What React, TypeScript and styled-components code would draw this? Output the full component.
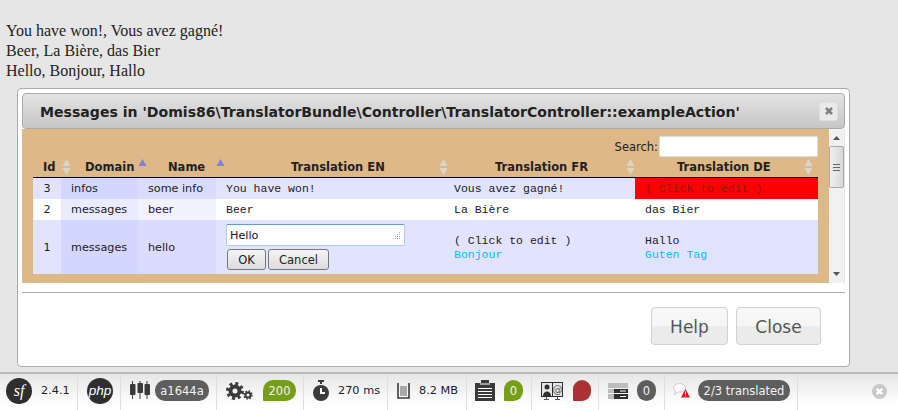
import React from 'react';
import styled, { createGlobalStyle } from 'styled-components';

const GlobalStyle = createGlobalStyle`
  html, body {
    margin: 0;
    height: 410px;
    overflow: hidden;
    background: #e6e6e6;
    font-family: "Liberation Serif", serif;
  }
`;

const Page = styled.div`
  width: 898px;
  height: 410px;
  display: flex;
  flex-direction: column;
`;

const Greetings = styled.div`
  padding: 21px 0 7px 6px;
  font-size: 16px;
  line-height: 20px;
  color: #222;
`;

const Dialog = styled.div`
  margin-left: 17px;
  width: 823px;
  height: 269px;
  padding: 4px;
  background: #fff;
  border: 1px solid #aaa;
  border-radius: 4px;
  font-family: "DejaVu Sans", sans-serif;
`;

const TitleBar = styled.div`
  height: 34px;
  display: flex;
  align-items: center;
  justify-content: space-between;
  padding: 0 6px 0 17px;
  background: linear-gradient(#e3e3e3, #c6c6c6);
  border: 1px solid #aaa;
  border-radius: 4px;
  font-size: 14.08px;
  font-weight: bold;
  color: #222;

  > span {
    padding-top: 2px;
  }
`;

const CloseX = styled.button`
  width: 19px;
  height: 19px;
  padding: 0;
  border: 1px solid #dedede;
  border-radius: 3px;
  background: #eaeaea;
  color: #808080;
  display: flex;
  align-items: center;
  justify-content: center;
`;

const Body = styled.div`
  display: flex;
  height: 154px;
`;

const Content = styled.div`
  width: 808px;
  padding: 7px 11px 9px;
  box-sizing: border-box;
  background: #deb887;
`;

const SearchRow = styled.label`
  height: 21px;
  display: flex;
  justify-content: flex-end;
  align-items: center;
  gap: 1px;
  font-size: 11.5px;
  color: #222;
`;

const SearchInput = styled.div`
  width: 157px;
  height: 19px;
  background: #fff;
  border: 1px solid #ddd;
  border-radius: 1px;
`;

const Table = styled.table`
  width: 785px;
  table-layout: fixed;
  border-collapse: collapse;
`;

const Head = styled.th<{ $x: number }>`
  position: relative;
  height: 20px;
  padding: 0 0 0 ${(p) => p.$x}px;
  border-bottom: 1px solid #000;
  font-size: 11.5px;
  font-weight: bold;
  color: #222;
  text-align: left;
  white-space: nowrap;
`;

const SortMark = styled.svg<{ $r: number }>`
  position: absolute;
  top: 2px;
  right: ${(p) => p.$r}px;
`;

const Row = styled.tr<{ $even?: boolean; $tall?: boolean }>`
  background: ${(p) => (p.$even ? '#fff' : '#e2e4ff')};

  td {
    height: ${(p) => (p.$tall ? 54 : 21)}px;
  }
`;

const Cell = styled.td<{ $sorted?: 'a' | 'b'; $even?: boolean }>`
  padding: 0 0 0 10px;
  font-size: 11.2px;
  color: #222;
  background: ${(p) =>
    p.$sorted === 'a'
      ? p.$even ? '#eaebff' : '#d3d6ff'
      : p.$sorted === 'b'
      ? p.$even ? '#f2f3ff' : '#dadcff'
      : 'transparent'};
`;

const IdCell = styled(Cell)`
  padding: 0;
  text-align: center;
`;

const TextCell = styled(Cell)<{ $missing?: boolean }>`
  font-family: "Liberation Mono", monospace;
  font-size: 11.5px;
  background: ${(p) => (p.$missing ? '#f00' : 'transparent')};
  color: ${(p) => (p.$missing ? '#8a1a1a' : '#222')};
  vertical-align: middle;
`;

const Pending = styled.div`
  color: #00bfff;
  margin-top: 1px;
`;

const EditBox = styled.div`
  width: 179px;
  height: 22px;
  box-sizing: border-box;
  padding: 3px 3px;
  background: #fff;
  border: 1px solid #a9cdea;
  border-top-color: #5f9fd0;
  border-radius: 2px;
  font: 11.2px "DejaVu Sans", sans-serif;
  color: #111;
  display: flex;
  align-items: center;
  justify-content: space-between;
`;

const EditButtons = styled.div`
  display: flex;
  gap: 2px;
  margin: 3px 0 0 1px;
`;

const SmallButton = styled.button<{ $w: number }>`
  width: ${(p) => p.$w}px;
  height: 21px;
  padding: 0;
  font: 11.5px "DejaVu Sans", sans-serif;
  color: #222;
  background: linear-gradient(#f4f4f4, #dcdcdc);
  border: 1px solid #777;
  border-radius: 3px;
`;

const Scrollbar = styled.div`
  width: 15px;
  display: flex;
  flex-direction: column;
  align-items: center;
  background: #f1f1f1;
  border-right: 1px solid #e4e4e4;
  padding: 7px 0 7px;
  box-sizing: content-box;
  height: 140px;
`;

const Thumb = styled.div`
  width: 13px;
  height: 40px;
  margin-top: 6px;
  display: flex;
  align-items: center;
  justify-content: center;
  background: linear-gradient(90deg, #f0f0f0, #d8d8d8);
  border: 1px solid #aaa;
  border-radius: 2px;
`;

const ScrollSpace = styled.div`
  flex: 1;
`;

const Rule = styled.div`
  height: 1px;
  margin-top: 9px;
  background: #aaa;
`;

const Footer = styled.div`
  display: flex;
  justify-content: flex-end;
  gap: 8px;
  padding: 14px 24px 0 0;
`;

const BigButton = styled.button<{ $w: number }>`
  width: ${(p) => p.$w}px;
  height: 38px;
  padding: 2px 0 0;
  font: 17px "DejaVu Sans", sans-serif;
  color: #555;
  background: linear-gradient(#f6f6f6 50%, #ebebeb 50%);
  border: 1px solid #d0d0d0;
  border-radius: 4px;
`;

const Toolbar = styled.div`
  margin-top: 5px;
  flex: 1;
  display: flex;
  position: relative;
  background: linear-gradient(#e6e6e6, #fff 85%);
  border-top: 2px solid #bbb;
  font: 11.3px "DejaVu Sans", sans-serif;
  color: #222;
`;

const Block = styled.div<{ $w: number; $gap?: number; $pad?: number }>`
  width: ${(p) => p.$w}px;
  box-sizing: border-box;
  padding: 0 0 3px ${(p) => p.$pad ?? 9}px;
  border-right: 1px solid #e0e0e0;
  display: flex;
  align-items: center;
  gap: ${(p) => p.$gap ?? 9}px;
  white-space: nowrap;
`;

const Logo = styled.span`
  width: 26px;
  height: 26px;
  border-radius: 50%;
  background: #2f2f2f;
  color: #fff;
  display: flex;
  align-items: center;
  justify-content: center;
  flex: none;
`;

const SfMark = styled(Logo)`
  font: italic 16px "Liberation Serif", serif;
`;

const PhpMark = styled(Logo)`
  font: italic 13.5px "Liberation Sans", sans-serif;
`;

const Badge = styled.span<{ $w?: number }>`
  height: 21px;
  width: ${(p) => p.$w ?? 0}px;
  box-sizing: border-box;
  display: flex;
  align-items: center;
  justify-content: center;
  background: #5e5e5e;
  color: #f2f2f2;
  border-radius: 10px;
  font-size: 11.5px;
`;

const StatusBadge = styled(Badge)<{ $red?: boolean }>`
  background: ${(p) => (p.$red ? '#a93232' : '#759e1a')};
  border-radius: 10px 10px 10px 1px;
`;

const Dismiss = styled.span`
  position: absolute;
  right: 11px;
  top: 10px;
  width: 15px;
  height: 15px;
  border-radius: 50%;
  background: #c9c9c9;
  color: #fff;
  display: flex;
  align-items: center;
  justify-content: center;
`;

const X = ({ size = 10 }: { size?: number }) => (
  <svg width={size} height={size} viewBox="0 0 10 10">
    <path d="M2 2l6 6M8 2l-6 6" stroke="currentColor" strokeWidth="2.6" />
  </svg>
);

const Sort = ({ state, r }: { state?: 'asc'; r: number }) => (
  <SortMark $r={r} width="9" height="16" viewBox="0 0 9 16">
    {state === 'asc' ? (
      <path d="M4.500 0L8.500 7H.5z" fill="#8080d8" />
    ) : (
      <>
        <path d="M4.500 0L8.500 7H.5z" fill="#d9d6cc" />
        <path d="M4.500 16L8.500 9H.5z" fill="#d9d6cc" />
      </>
    )}
  </SortMark>
);

const columns = [
  { title: 'Id', w: 28, x: 10, r: -9.5 },
  { title: 'Domain', w: 77, x: 24, r: -8.5, state: 'asc' as const },
  { title: 'Name', w: 78, x: 30, r: -8.5, state: 'asc' as const },
  { title: 'Translation EN', w: 228, x: 75, r: -3.5 },
  { title: 'Translation FR', w: 191, x: 51, r: 0.5 },
  { title: 'Translation DE', w: 183, x: 42, r: 5.5 },
];

export default function App() {
  return (
    <Page>
      <GlobalStyle />
      <Greetings>
        You have won!, Vous avez gagné!
        <br />
        Beer, La Bière, das Bier
        <br />
        Hello, Bonjour, Hallo
      </Greetings>
      <Dialog>
        <TitleBar>
          <span>Messages in 'Domis86\TranslatorBundle\Controller\TranslatorController::exampleAction'</span>
          <CloseX>
            <X />
          </CloseX>
        </TitleBar>
        <Body>
          <Content>
            <SearchRow>
              Search:
              <SearchInput />
            </SearchRow>
            <Table>
              <colgroup>
                {columns.map((c) => (
                  <col key={c.title} width={c.w} />
                ))}
              </colgroup>
              <thead>
                <tr>
                  {columns.map((c) => (
                    <Head key={c.title} $x={c.x}>
                      {c.title}
                      <Sort state={c.state} r={c.r} />
                    </Head>
                  ))}
                </tr>
              </thead>
              <tbody>
                <Row>
                  <IdCell>3</IdCell>
                  <Cell $sorted="a">infos</Cell>
                  <Cell $sorted="b">some info</Cell>
                  <TextCell>You have won!</TextCell>
                  <TextCell>Vous avez gagné!</TextCell>
                  <TextCell $missing>( Click to edit )</TextCell>
                </Row>
                <Row $even>
                  <IdCell>2</IdCell>
                  <Cell $sorted="a" $even>messages</Cell>
                  <Cell $sorted="b" $even>beer</Cell>
                  <TextCell>Beer</TextCell>
                  <TextCell>La Bière</TextCell>
                  <TextCell>das Bier</TextCell>
                </Row>
                <Row $tall>
                  <IdCell>1</IdCell>
                  <Cell $sorted="a">messages</Cell>
                  <Cell $sorted="b">hello</Cell>
                  <TextCell>
                    <EditBox>
                      Hello
                      <svg width="9" height="9" viewBox="0 0 9 9">
                        <path d="M7 1h1v1H7zM5 3h1v1H5zM7 3h1v1H7zM3 5h1v1H3zM5 5h1v1H5zM7 5h1v1H7zM1 7h1v1H1zM3 7h1v1H3zM5 7h1v1H5zM7 7h1v1H7z" fill="#aaa" />
                      </svg>
                    </EditBox>
                    <EditButtons>
                      <SmallButton $w={39}>OK</SmallButton>
                      <SmallButton $w={61}>Cancel</SmallButton>
                    </EditButtons>
                  </TextCell>
                  <TextCell>
                    ( Click to edit )
                    <Pending>Bonjour</Pending>
                  </TextCell>
                  <TextCell>
                    Hallo
                    <Pending>Guten Tag</Pending>
                  </TextCell>
                </Row>
              </tbody>
            </Table>
          </Content>
          <Scrollbar>
            <svg width="7" height="4" viewBox="0 0 7 4">
              <path d="M3.500 0L7 4H0z" fill="#555" />
            </svg>
            <Thumb>
              <svg width="7" height="7" viewBox="0 0 7 7">
                <path d="M0 .5h7M0 3.500h7M0 6.500h7" stroke="#666" />
              </svg>
            </Thumb>
            <ScrollSpace />
            <svg width="7" height="4" viewBox="0 0 7 4">
              <path d="M3.500 4L7 0H0z" fill="#555" />
            </svg>
          </Scrollbar>
        </Body>
        <Rule />
        <Footer>
          <BigButton $w={77}>Help</BigButton>
          <BigButton $w={85}>Close</BigButton>
        </Footer>
      </Dialog>
      <Toolbar>
        <Block $w={78} $pad={6}>
          <SfMark>sf</SfMark>
          2.4.1
        </Block>
        <Block $w={43}>
          <PhpMark>php</PhpMark>
        </Block>
        <Block $w={96} $gap={5}>
          <svg width="20" height="19" viewBox="0 0 20 19" fill="#3a3a3a">
            <path d="M2 0h1v18H2zM9.500 0h1v18h-1zM16.500 0h1v18h-1z" />
            <rect x="0" y="3" width="5.500" height="11" rx="1" />
            <rect x="7.500" y="2" width="5.500" height="10" rx="1" />
            <rect x="14.500" y="3" width="5.500" height="11" rx="1" />
          </svg>
          <Badge $w={54}>a1644a</Badge>
        </Block>
        <Block $w={87} $gap={10}>
          <svg width="27" height="18" viewBox="0 0 27 18">
            <circle cx="9" cy="9" r="4.500" fill="none" stroke="#3a3a3a" strokeWidth="4" />
            <circle cx="9" cy="9" r="7.500" fill="none" stroke="#3a3a3a" strokeWidth="3" strokeDasharray="2.950 2.950" />
            <circle cx="22" cy="13" r="2.500" fill="none" stroke="#3a3a3a" strokeWidth="2" />
            <circle cx="22" cy="13" r="4" fill="none" stroke="#3a3a3a" strokeWidth="1.500" strokeDasharray="1.570 1.570" />
          </svg>
          <StatusBadge $w={33}>200</StatusBadge>
        </Block>
        <Block $w={84}>
          <svg width="16" height="21" viewBox="0 0 16 21">
            <path d="M5 0h6v2H5zM7 2h2v2H7z" fill="#3a3a3a" />
            <circle cx="8" cy="13" r="8" fill="#3a3a3a" />
            <path d="M8 8v5h4" fill="none" stroke="#fff" strokeWidth="2" />
          </svg>
          270 ms
        </Block>
        <Block $w={79}>
          <svg width="13" height="16" viewBox="0 0 13 16">
            <path d="M3 3h7v10H3z" fill="#a8a8a8" />
            <path d="M1 0v15h11V0" fill="none" stroke="#3a3a3a" strokeWidth="1.600" />
          </svg>
          8.2 MB
        </Block>
        <Block $w={65} $pad={8}>
          <svg width="20" height="21" viewBox="0 0 20 21">
            <path d="M0 3h6V0h8v3h6v18H0z" fill="#3a3a3a" />
            <path d="M5 4h10" stroke="#fff" />
            <path d="M3 8.500h14M3 11.500h14M3 14.500h14M3 17.500h14" stroke="#fff" />
          </svg>
          <StatusBadge $w={19}>0</StatusBadge>
        </Block>
        <Block $w={67} $gap={10}>
          <svg width="22" height="18" viewBox="0 0 22 18">
            <path d="M0 0h22v15H0z" fill="#2f2f2f" />
            <path d="M1 1h10v13H1zM12 1h9v13h-9z" fill="#e6e6e6" />
            <circle cx="6" cy="5" r="2.500" fill="#2f2f2f" />
            <path d="M2 14c0-6 8-6 8 0z" fill="#2f2f2f" />
            <text x="16.500" y="10.500" textAnchor="middle" fontSize="10" fontFamily="DejaVu Sans" fill="#555">@</text>
            <path d="M5 15h1v3H5zM16 15h1v3h-1zM3 17h5v1H3zM14 17h5v1h-5z" fill="#555" />
          </svg>
          <StatusBadge $red $w={18} />
        </Block>
        <Block $w={66}>
          <svg width="20" height="16" viewBox="0 0 20 16">
            <path d="M0 0h20v5H0z" fill="#bdbdbd" />
            <path d="M6 6h14v4H6zM6 11h14v5H6z" fill="#2f2f2f" />
            <path d="M0 6h6v4H0zM0 11h6v5H0z" fill="#bdbdbd" />
            <path d="M12 8h6M12 13.500h6" stroke="#fff" />
          </svg>
          <Badge $w={19}>0</Badge>
        </Block>
        <Block $w={133} $pad={8} $gap={8}>
          <svg width="17" height="15" viewBox="0 0 17 15">
            <path d="M.5 5c0-6 12-6 12 0 0 4-5 4-8 4l-3 3 1-4C1.500 7.500.5 6.500.5 5z" fill="#fff" stroke="#ccc" />
            <path d="M12.500 6l4.500 8.500H8z" fill="#d01818" />
            <path d="M12.500 8.500v3M12.500 12.500v1" stroke="#fff" />
          </svg>
          <Badge $w={92}>2/3 translated</Badge>
        </Block>
        <Dismiss>
          <X size={9} />
        </Dismiss>
      </Toolbar>
    </Page>
  );
}
